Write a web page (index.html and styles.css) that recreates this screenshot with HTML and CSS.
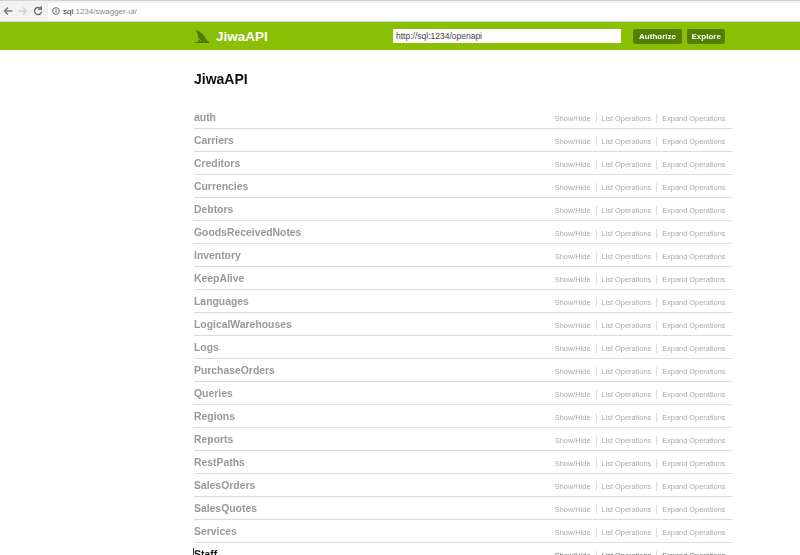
FILE: index.html
```html
<!DOCTYPE html>
<html lang="en">

<head>
    <meta charset="utf-8">
    <title>JiwaAPI</title>
    <link rel="stylesheet" href="styles.css">
</head>

<body>

    <div class="browserbar">
        <svg class="navicon" width="10" height="10" viewBox="0 0 14 14"><path d="M13 7H2M7 2 2 7l5 5" fill="none" stroke="#777" stroke-width="2"/></svg>
        <svg class="navicon" width="10" height="10" viewBox="0 0 14 14"><path d="M1 7h11M7 2l5 5-5 5" fill="none" stroke="#d4d4d4" stroke-width="2"/></svg>
        <svg class="navicon" width="10" height="10" viewBox="0 0 14 14"><path d="M12 8A5 5 0 1 1 10.5 3.4M11.5 0.5v4.2H7.3" fill="none" stroke="#6e6e6e" stroke-width="2"/></svg>
        <div class="addressbar">
            <svg width="8" height="8" viewBox="0 0 11 11"><circle cx="5.5" cy="5.5" r="4.6" fill="none" stroke="#555" stroke-width="1.2"/><path d="M5.5 4.8v3.2M5.5 2.7v1.2" stroke="#555" stroke-width="1.3"/></svg>
            <span class="host">sql</span><span class="rest">:1234/swagger-ui/</span>
        </div>
    </div>

    <header class="topbar">
        <div class="topbar_inner">
            <a class="logo" href="#">
                <svg width="14" height="13" viewBox="0 0 14 13"><path d="M1 0c4 1 7 4 9 7 1 2 2 4 4 5v1H0v-1h3C4 8 3 4 1 0Z" fill="#4f7a00"/><path d="M0 7c2 .5 5 2 6 4" fill="none" stroke="#89bf04" stroke-width="1"/></svg>
                <span>JiwaAPI</span>
            </a>
            <input class="apiurl" type="text" value="http://sql:1234/openapi">
            <button class="knop knop_auth">Authorize</button>
            <button class="knop">Explore</button>
        </div>
    </header>

    <main class="indhold">
        <h1>JiwaAPI</h1>
        <ul class="resourcer">
            <li class="resource"><a class="navn">auth</a><div class="links"><a>Show/Hide</a><a>List Operations</a><a>Expand Operations</a></div></li>
            <li class="resource"><a class="navn">Carriers</a><div class="links"><a>Show/Hide</a><a>List Operations</a><a>Expand Operations</a></div></li>
            <li class="resource"><a class="navn">Creditors</a><div class="links"><a>Show/Hide</a><a>List Operations</a><a>Expand Operations</a></div></li>
            <li class="resource"><a class="navn">Currencies</a><div class="links"><a>Show/Hide</a><a>List Operations</a><a>Expand Operations</a></div></li>
            <li class="resource"><a class="navn">Debtors</a><div class="links"><a>Show/Hide</a><a>List Operations</a><a>Expand Operations</a></div></li>
            <li class="resource"><a class="navn">GoodsReceivedNotes</a><div class="links"><a>Show/Hide</a><a>List Operations</a><a>Expand Operations</a></div></li>
            <li class="resource"><a class="navn">Inventory</a><div class="links"><a>Show/Hide</a><a>List Operations</a><a>Expand Operations</a></div></li>
            <li class="resource"><a class="navn">KeepAlive</a><div class="links"><a>Show/Hide</a><a>List Operations</a><a>Expand Operations</a></div></li>
            <li class="resource"><a class="navn">Languages</a><div class="links"><a>Show/Hide</a><a>List Operations</a><a>Expand Operations</a></div></li>
            <li class="resource"><a class="navn">LogicalWarehouses</a><div class="links"><a>Show/Hide</a><a>List Operations</a><a>Expand Operations</a></div></li>
            <li class="resource"><a class="navn">Logs</a><div class="links"><a>Show/Hide</a><a>List Operations</a><a>Expand Operations</a></div></li>
            <li class="resource"><a class="navn">PurchaseOrders</a><div class="links"><a>Show/Hide</a><a>List Operations</a><a>Expand Operations</a></div></li>
            <li class="resource"><a class="navn">Queries</a><div class="links"><a>Show/Hide</a><a>List Operations</a><a>Expand Operations</a></div></li>
            <li class="resource"><a class="navn">Regions</a><div class="links"><a>Show/Hide</a><a>List Operations</a><a>Expand Operations</a></div></li>
            <li class="resource"><a class="navn">Reports</a><div class="links"><a>Show/Hide</a><a>List Operations</a><a>Expand Operations</a></div></li>
            <li class="resource"><a class="navn">RestPaths</a><div class="links"><a>Show/Hide</a><a>List Operations</a><a>Expand Operations</a></div></li>
            <li class="resource"><a class="navn">SalesOrders</a><div class="links"><a>Show/Hide</a><a>List Operations</a><a>Expand Operations</a></div></li>
            <li class="resource"><a class="navn">SalesQuotes</a><div class="links"><a>Show/Hide</a><a>List Operations</a><a>Expand Operations</a></div></li>
            <li class="resource"><a class="navn">Services</a><div class="links"><a>Show/Hide</a><a>List Operations</a><a>Expand Operations</a></div></li>
            <li class="resource resource_aktiv"><a class="navn">Staff</a><div class="links"><a>Show/Hide</a><a>List Operations</a><a>Expand Operations</a></div></li>
        </ul>
    </main>

</body>

</html>
```

FILE: styles.css
```css
html, body {
    height: 555px;
    overflow: hidden;
}

body {
    margin: 0;
    background-color: #fff;
    font-family: 'Liberation Sans', Arial, sans-serif;
    filter: blur(0.35px);
}

.browserbar {
    height: 22px;
    box-sizing: border-box;
    display: flex;
    align-items: center;
    gap: 5px;
    padding-left: 3px;
    background-color: #f2f2f2;
    border-top: 1px solid #d4d4d4;
    border-bottom: 1px solid #d8d8d8;
}

.addressbar {
    flex: 1;
    height: 17px;
    box-sizing: border-box;
    display: flex;
    align-items: center;
    margin-left: 0;
    padding-left: 4px;
    background-color: #fff;
    font-size: 8px;
}

.addressbar svg {
    margin-right: 3px;
}

.host {
    color: #333;
}

.rest {
    color: #888;
}

.topbar {
    height: 28px;
    background-color: #89bf04;
}

.topbar_inner {
    width: 538px;
    margin-left: 194px;
    height: 100%;
    display: flex;
    align-items: center;
}

.logo {
    display: flex;
    align-items: center;
    gap: 7px;
    width: 199px;
    padding-left: 1px;
    box-sizing: border-box;
    color: #fff;
    font-size: 13.5px;
    font-weight: bold;
    text-decoration: none;
}

.apiurl {
    width: 228px;
    height: 14px;
    box-sizing: border-box;
    margin: 0 12px 0 0;
    padding: 0 2px;
    border: 1px solid #fff;
    background-color: #fff;
    color: #444;
    font-family: inherit;
    font-size: 8.5px;
}

.knop {
    height: 15px;
    margin-right: 5px;
    padding: 0 4.5px;
    border: 0;
    border-radius: 2px;
    background-color: #547f00;
    color: #fff;
    font-family: inherit;
    font-size: 8px;
    font-weight: bold;
}

.knop_auth {
    width: 49px;
}

.indhold {
    width: 538px;
    margin-left: 194px;
}

h1 {
    margin: 0;
    padding: 20px 0 17px;
    height: 19px;
    color: #111;
    font-size: 14px;
    line-height: 19px;
}

.resourcer {
    margin: 0;
    padding: 0;
    list-style: none;
}

.resource {
    height: 23px;
    box-sizing: border-box;
    display: flex;
    justify-content: space-between;
    align-items: center;
    border-bottom: 1px solid #ddd;
}

.navn {
    color: #999;
    font-size: 10.4px;
    font-weight: bold;
}

.resource_aktiv {
    position: relative;
}

/* tekstmarkoeren foran Staff */
.resource_aktiv::before {
    content: "";
    position: absolute;
    left: -1px;
    top: 5px;
    width: 1px;
    height: 11px;
    background-color: #333;
}

.resource_aktiv .navn {
    color: #111;
}

.resource_aktiv .links a {
    color: #666;
}

.links {
    display: flex;
    padding: 2px 6.5px 0 0;
    font-size: 7.4px;
}

.links a {
    color: #aaa;
    padding: 0 5px 0 5px;
    border-right: 1px solid #ddd;
}

.links a:last-child {
    padding-right: 0;
    border-right: 0;
}
```
